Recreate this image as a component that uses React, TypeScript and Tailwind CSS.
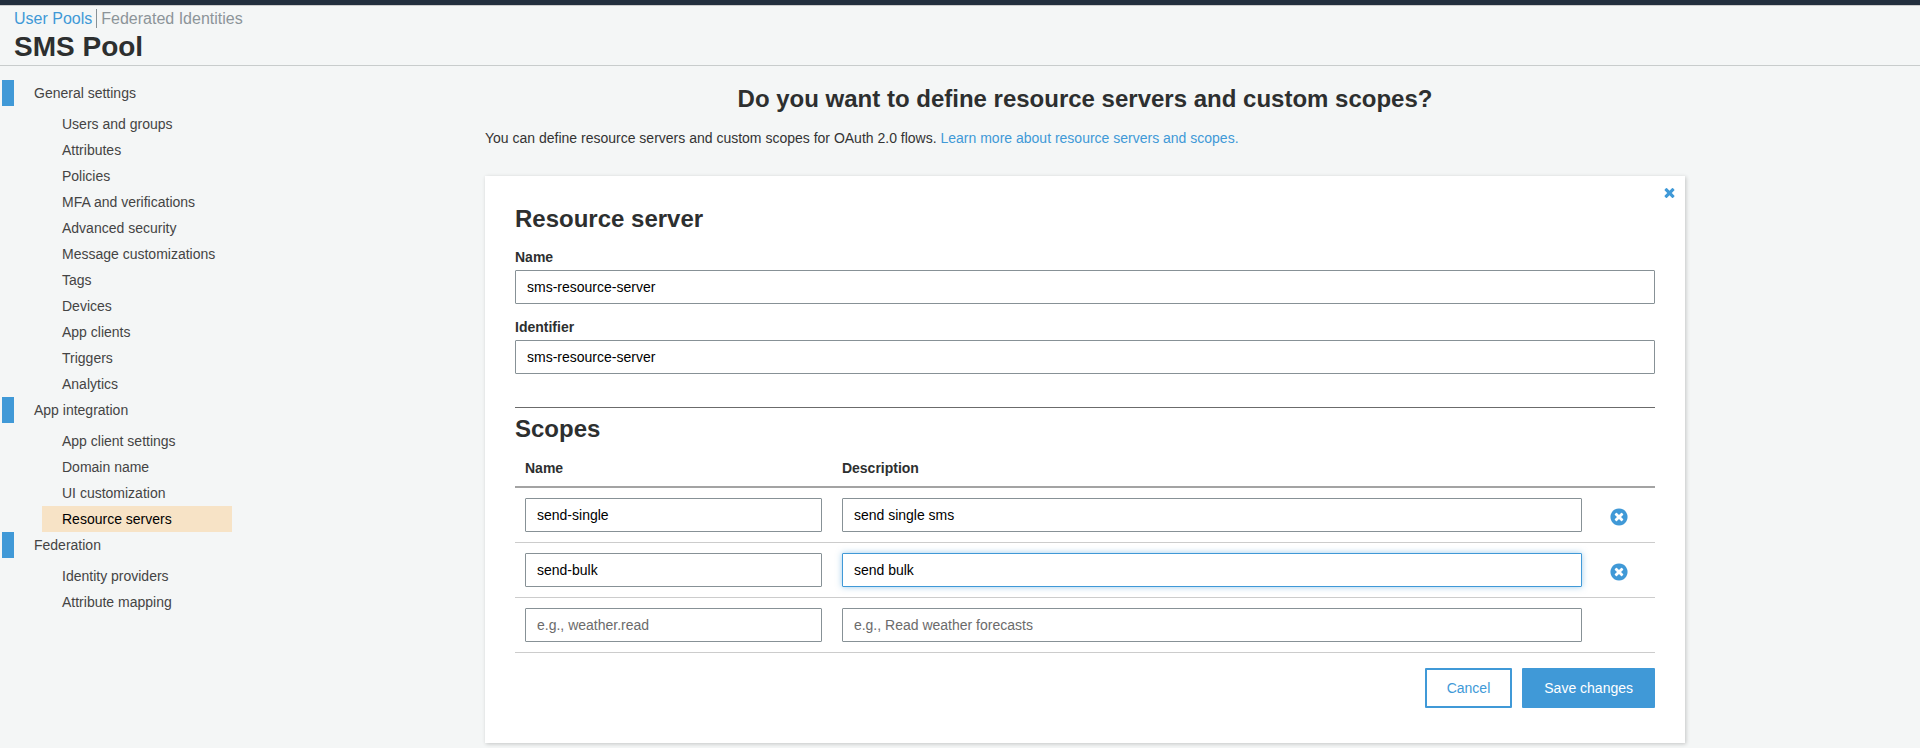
import React from "react";

type NavSection = { title: string; items: string[] };

const sections: NavSection[] = [
  {
    title: "General settings",
    items: [
      "Users and groups",
      "Attributes",
      "Policies",
      "MFA and verifications",
      "Advanced security",
      "Message customizations",
      "Tags",
      "Devices",
      "App clients",
      "Triggers",
      "Analytics",
    ],
  },
  {
    title: "App integration",
    items: ["App client settings", "Domain name", "UI customization", "Resource servers"],
  },
  { title: "Federation", items: ["Identity providers", "Attribute mapping"] },
];

const activeItem = "Resource servers";

const scopes = [
  { name: "send-single", description: "send single sms", editing: false, removable: true },
  { name: "send-bulk", description: "send bulk", editing: true, removable: true },
  { name: "", description: "", editing: false, removable: false },
];

const inputBase =
  "block h-[34px] w-full rounded-[1px] border bg-white px-[11px] text-sm text-black outline-none placeholder:text-[#6b6b6b] focus:border-[#4099d7]";
const inputIdle = "border-[#879196]";
const inputEditing = "border-[#4099d7] shadow-[0_0_6px_rgba(64,153,215,0.5)]";

function CrossIcon() {
  return (
    <svg viewBox="0 0 1792 1792" className="size-[15px]" fill="currentColor" aria-hidden="true">
      <path d="M1490 1322q0 40-28 68l-136 136q-28 28-68 28t-68-28l-294-294-294 294q-28 28-68 28t-68-28l-136-136q-28-28-28-68t28-68l294-294-294-294q-28-28-28-68t28-68l136-136q28-28 68-28t68 28l294 294 294-294q28-28 68-28t68 28l136 136q28 28 28 68t-28 68l-294 294 294 294q28 28 28 68z" />
    </svg>
  );
}

function CrossCircleIcon() {
  return (
    <svg viewBox="0 0 1792 1792" className="size-5" fill="currentColor" aria-hidden="true">
      <path d="M1277 1122q0-26-19-45l-181-181 181-181q19-19 19-45 0-27-19-46l-90-90q-19-19-46-19-26 0-45 19l-181 181-181-181q-19-19-45-19-27 0-46 19l-90 90q-19 19-19 46 0 26 19 45l181 181-181 181q-19 19-19 45 0 27 19 46l90 90q19 19 46 19 26 0 45-19l181-181 181 181q19 19 45 19 27 0 46-19l90-90q19-19 19-46zm387-226q0 209-103 385.5t-279.5 279.5-385.5 103-385.5-103-279.5-279.5-103-385.5 103-385.5 279.5-279.5 385.5-103 385.5 103 279.5 279.5 103 385.5z" />
    </svg>
  );
}

function Header() {
  return (
    <header className="border-b border-[#c8cccc]">
      <div className="h-[6px] border-b border-[#cccccc] bg-[#232f3e]" />
      <nav className="flex items-center px-3.5 pt-[3px] text-base leading-[19px]">
        <a href="#user-pools" className="border-r border-[#879196] pr-1 text-[#4099d7]">
          User Pools
        </a>
        <a href="#federated" className="pl-1 text-[#8c9499]">
          Federated Identities
        </a>
      </nav>
      <h1 className="px-3.5 pt-[3px] pb-0.5 text-[28px] leading-8 font-bold text-[#2d2f2f]">SMS Pool</h1>
    </header>
  );
}

function Sidebar() {
  return (
    <nav aria-label="Pool settings" className="w-[250px] shrink-0 pt-3.5 pl-0.5 text-sm leading-[26px] text-[#444444]">
      {sections.map((section) => (
        <section key={section.title}>
          <h2 className="border-l-[12px] border-[#4099d7] pl-5">{section.title}</h2>
          <ul className="mr-[18px] ml-10 pt-[5px]">
            {section.items.map((item) => (
              <li key={item}>
                <a
                  href="#item"
                  className={item === activeItem ? "block bg-[#f7e3c6] pl-5 text-black" : "block pl-5"}
                >
                  {item}
                </a>
              </li>
            ))}
          </ul>
        </section>
      ))}
    </nav>
  );
}

function ScopesTable() {
  return (
    <table className="w-full table-fixed border-collapse text-sm">
      <colgroup>
        <col className="w-[27.8%]" />
        <col />
        <col className="w-[63px]" />
      </colgroup>
      <thead>
        <tr className="border-b-2 border-[#a3a3a3] text-left text-[#2d2f2f]">
          <th className="h-[41px] px-2.5 pt-1 font-bold">Name</th>
          <th className="px-2.5 pt-1 font-bold">Description</th>
          <td />
        </tr>
      </thead>
      <tbody>
        {scopes.map((scope, i) => (
          <tr key={i} className="border-b border-[#cccccc]">
            <td className="p-2.5">
              <input
                aria-label="Scope name"
                className={`${inputBase} ${inputIdle}`}
                defaultValue={scope.name}
                placeholder="e.g., weather.read"
              />
            </td>
            <td className="p-2.5">
              <input
                aria-label="Scope description"
                className={`${inputBase} ${scope.editing ? inputEditing : inputIdle}`}
                defaultValue={scope.description}
                placeholder="e.g., Read weather forecasts"
              />
            </td>
            <td className="pt-1 pl-[17px]">
              {scope.removable && (
                <button type="button" aria-label="Remove scope" className="block text-[#4099d7]">
                  <CrossCircleIcon />
                </button>
              )}
            </td>
          </tr>
        ))}
      </tbody>
    </table>
  );
}

function ResourceServerCard() {
  return (
    <form className="relative mt-7 bg-white px-[30px] pt-7 pb-[35px] shadow-[1px_1px_4px_rgba(0,0,0,0.2)]">
      <button type="button" aria-label="Close" className="absolute top-[9px] right-2 text-[#4099d7]">
        <CrossIcon />
      </button>
      <h2 className="text-2xl leading-[30px] font-bold text-[#2d2f2f]">Resource server</h2>
      <label htmlFor="server-name" className="mt-[13px] block pb-[3px] text-sm font-bold text-[#2d2f2f]">
        Name
      </label>
      <input
        id="server-name"
        className={`${inputBase} ${inputIdle}`}
        defaultValue="sms-resource-server"
      />
      <label htmlFor="server-identifier" className="mt-[13px] block pb-[3px] text-sm font-bold text-[#2d2f2f]">
        Identifier
      </label>
      <input
        id="server-identifier"
        className={`${inputBase} ${inputIdle}`}
        defaultValue="sms-resource-server"
      />
      <hr className="mt-[33px] border-[#6b6b6b]" />
      <h2 className="pt-1.5 text-2xl leading-[30px] font-bold text-[#2d2f2f]">Scopes</h2>
      <div className="pt-0.5">
        <ScopesTable />
      </div>
      <div className="mt-[15px] flex justify-end gap-2.5 text-sm">
        <button type="button" className="h-10 rounded-[1px] border-2 border-[#4099d7] bg-white px-5 text-[#4099d7]">
          Cancel
        </button>
        <button type="submit" className="h-10 rounded-[1px] bg-[#4099d7] px-[22px] text-white">
          Save changes
        </button>
      </div>
    </form>
  );
}

export default function App() {
  return (
    <div className="min-h-screen bg-[#f4f6f6] font-['Liberation_Sans',Arial,sans-serif]">
      <Header />
      <div className="flex">
        <Sidebar />
        <main className="min-w-0 flex-1 pt-[18px] pb-[5px]">
          <div className="mx-auto max-w-[1200px]">
            <h1 className="text-center text-2xl leading-[30px] font-bold text-[#2d2f2f]">
              Do you want to define resource servers and custom scopes?
            </h1>
            <p className="pt-3.5 text-sm text-[#333333]">
              You can define resource servers and custom scopes for OAuth 2.0 flows.{" "}
              <a href="#learn-more" className="text-[#4099d7]">
                Learn more about resource servers and scopes.
              </a>
            </p>
            <ResourceServerCard />
          </div>
        </main>
      </div>
    </div>
  );
}
